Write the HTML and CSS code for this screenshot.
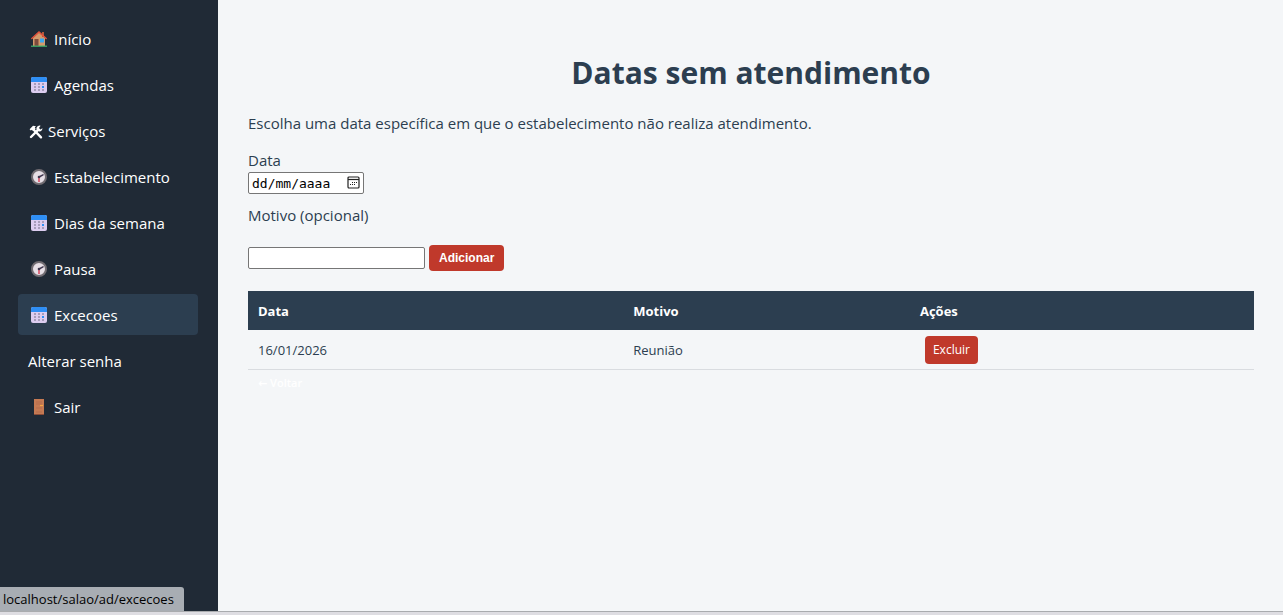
FILE: index.html
```
<!DOCTYPE html>
<html lang="pt-br">
<head>
  <meta charset="UTF-8">
  <meta name="viewport" content="width=device-width, initial-scale=1.0">
  <title>Datas sem atendimento</title>
  <link rel="stylesheet" href="styles.css">
</head>
<body>
  <svg class="sprite" aria-hidden="true">
    <symbol id="casa" viewBox="0 0 16 16">
      <path d="M2 7L8 1.5L14 7V15H2Z" fill="#d39a6c"/>
      <path d="M11 1h2v5h-2z" fill="#b5583c"/>
      <path d="M0.8 7.6L8 1L15.2 7.6" fill="none" stroke="#e5533d" stroke-width="1.4" stroke-linecap="round"/>
      <path d="M3.5 8h4v7h-4z" fill="#7d4b3c"/>
      <path d="M9 7.5h4v4H9z" fill="#3ba9f0"/>
      <path d="M0 14.6h16v1.2H0z" fill="#3fb56b"/>
    </symbol>
    <symbol id="calendario" viewBox="0 0 16 16">
      <rect width="16" height="16" rx="2" fill="#dccdf0"/>
      <path d="M0 5V2a2 2 0 0 1 2-2h12a2 2 0 0 1 2 2v3z" fill="#2f8ff5"/>
      <path d="M3 6h2v2H3zM7 6h2v2H7zM11 6h2v2h-2zM3 9h2v2H3zM7 9h2v2H7zM3 12h2v2H3zM7 12h2v2H7zM11 12h2v2h-2z" fill="#a79dbb"/>
      <path d="M11 9h2v2h-2z" fill="#2f8ff5"/>
    </symbol>
    <symbol id="ferramentas" viewBox="0 0 14 14">
      <path d="M4.5 4.5L12 12.3" stroke="#fff" stroke-width="2.4" stroke-linecap="round"/>
      <path d="M0.6 4.2L4 0.8L7 1.2L5.8 2.4L6.6 3.8L4.2 6.2L3 4.8L1.8 5.6Z" fill="#fff"/>
      <path d="M2 12L9.6 4.4" stroke="#fff" stroke-width="2.4" stroke-linecap="round"/>
      <path d="M11.6 0.8A3 3 0 1 0 13.4 3.2L11.4 4.4L9.8 3.2Z" fill="#fff"/>
    </symbol>
    <symbol id="relogio" viewBox="0 0 16 16">
      <circle cx="8" cy="8" r="7" fill="#e6dfe6" stroke="#716c72" stroke-width="2"/>
      <path d="M8 8L12 5.8" stroke="#40384f" stroke-width="1.5" stroke-linecap="round"/>
      <path d="M8 8V13" stroke="#d8475f" stroke-width="1.5"/>
      <circle cx="8" cy="8" r="1.3" fill="#40384f"/>
    </symbol>
    <symbol id="porta" viewBox="0 0 16 16">
      <path d="M3 0h10v16H3z" fill="#c57a53"/>
      <path d="M5 2h6v4H5zM5 8h6v2H5zM5 12h6v2H5z" fill="#bd7350"/>
      <path d="M3 15h10v1H3z" fill="#8c4d38"/>
      <path d="M9 6.5h3" stroke="#f5a742" stroke-width="1.2"/>
    </symbol>
  </svg>

  <div class="layout">
    <nav class="sidebar">
      <a href="#"><svg class="icone"><use href="#casa"/></svg>Início</a>
      <a href="#"><svg class="icone"><use href="#calendario"/></svg>Agendas</a>
      <a href="#"><svg class="icone ferramenta"><use href="#ferramentas"/></svg>Serviços</a>
      <a href="#"><svg class="icone"><use href="#relogio"/></svg>Estabelecimento</a>
      <a href="#"><svg class="icone"><use href="#calendario"/></svg>Dias da semana</a>
      <a href="#"><svg class="icone"><use href="#relogio"/></svg>Pausa</a>
      <a href="#" class="ativo"><svg class="icone"><use href="#calendario"/></svg>Excecoes</a>
      <a href="#">Alterar senha</a>
      <a href="#"><svg class="icone"><use href="#porta"/></svg>Sair</a>
    </nav>

    <main class="conteudo">
      <h1>Datas sem atendimento</h1>
      <p class="descricao">Escolha uma data específica em que o estabelecimento não realiza atendimento.</p>

      <form>
        <label for="data">Data</label>
        <div class="campo-data">
          <input type="text" id="data" value="dd/mm/aaaa">
          <svg viewBox="0 0 13 13" aria-hidden="true">
            <rect x="1" y="1" width="11" height="11" rx="1" fill="none" stroke="#222" stroke-width="1.2"/>
            <path d="M1 3.5h11" stroke="#222" stroke-width="1.2"/>
            <path d="M5 6h1v1H5zM7 6h1v1H7zM9 6h1v1H9zM3 8h1v1H3zM5 8h1v1H5zM7 8h1v1H7z" fill="#222"/>
          </svg>
        </div>
        <label for="motivo">Motivo (opcional)</label>
        <div class="linha">
          <input type="text" id="motivo">
          <button type="submit" class="btn-adicionar">Adicionar</button>
        </div>
      </form>

      <table>
        <thead>
          <tr>
            <th class="col-data">Data</th>
            <th class="col-motivo">Motivo</th>
            <th>Ações</th>
          </tr>
        </thead>
        <tbody>
          <tr>
            <td>16/01/2026</td>
            <td>Reunião</td>
            <td class="acoes"><button type="button" class="btn-excluir">Excluir</button></td>
          </tr>
        </tbody>
      </table>

      <a href="#" class="voltar">← Voltar</a>
    </main>
  </div>

  <div class="status-link">localhost/salao/ad/excecoes</div>
  <footer class="rodape"></footer>
</body>
</html>
```
FILE: styles.css
```
* {
  box-sizing: border-box;
}

body {
  margin: 0;
  min-height: 100vh;
  display: flex;
  flex-direction: column;
  position: relative;
  font-family: "Open Sans", "DejaVu Sans", sans-serif;
  font-size: 15px;
  line-height: 21px;
  background: #f4f6f8;
  color: #2c3e50;
}

.sprite {
  display: none;
}

.layout {
  display: flex;
  flex: 1;
}

/* Menu lateral */
.sidebar {
  width: 218px;
  flex-shrink: 0;
  padding: 18px 20px 18px 18px;
  display: flex;
  flex-direction: column;
  gap: 5px;
  background: #202a36;
}

.sidebar a {
  display: flex;
  align-items: center;
  padding: 11px 10px 9px;
  color: #fff;
  text-decoration: none;
  border-radius: 4px;
}

.sidebar a:hover,
.sidebar a.ativo {
  background: #2c3e50;
}

.icone {
  width: 16px;
  height: 16px;
  margin: 0 7px 2px 3px;
}

.icone.ferramenta {
  width: 14px;
  height: 14px;
  margin: 0 5px 0 1px;
}

/* Conteudo */
.conteudo {
  flex: 1;
  padding: 50px 29px 30px 30px;
}

h1 {
  margin: 0 0 18px;
  font-size: 30px;
  line-height: 45px;
  text-align: center;
}

.descricao {
  margin: 0 0 16px;
}

label {
  display: block;
}

.campo-data {
  position: relative;
  width: 116px;
  margin: 1px 0 11px;
}

input {
  display: block;
  border: 1px solid #767676;
  border-radius: 2px;
  background: #fff;
  color: #000;
}

.campo-data input {
  width: 100%;
  height: 22px;
  padding: 0 3px;
  font-family: "DejaVu Sans Mono", monospace;
  font-size: 13px;
}

.campo-data svg {
  position: absolute;
  top: 4px;
  right: 4px;
  width: 13px;
  height: 13px;
}

.linha {
  display: flex;
  align-items: center;
  gap: 4px;
  margin: 19px 0 20px;
}

.linha input {
  width: 177px;
  height: 22px;
}

button {
  border: none;
  background: #c0392b;
  color: #fff;
  cursor: pointer;
}

.btn-adicionar {
  height: 26px;
  padding: 0 10px;
  border-radius: 4px;
  font-family: "Liberation Sans", Arial, sans-serif;
  font-size: 12px;
  font-weight: bold;
}

table {
  width: 100%;
  border-collapse: collapse;
  font-size: 13px;
  line-height: 19px;
}

th,
td {
  padding: 11px 10px 9px;
  text-align: left;
}

th {
  background: #2c3e50;
  color: #fff;
}

td {
  border-bottom: 1px solid #d9dce0;
}

.col-data {
  width: 37.3%;
}

.col-motivo {
  width: 28.5%;
}

td.acoes {
  padding: 5px 15px;
}

.btn-excluir {
  display: block;
  height: 28px;
  padding: 0 8px;
  border-radius: 4px;
  font-family: inherit;
  font-size: 12px;
}

.voltar {
  display: inline-block;
  padding: 2px 10px;
  color: #fff;
  font-size: 11px;
  font-weight: 600;
  text-decoration: none;
}

/* Barra de status do link */
.status-link {
  position: absolute;
  left: 0;
  bottom: 4px;
  padding: 2px 10px 1px 3px;
  border-top-right-radius: 3px;
  background: #a8adb3;
  color: #000;
  font-size: 13px;
}

.rodape {
  height: 4px;
  border-top: 1px solid #a9abae;
  background: #dedde2;
}
```
